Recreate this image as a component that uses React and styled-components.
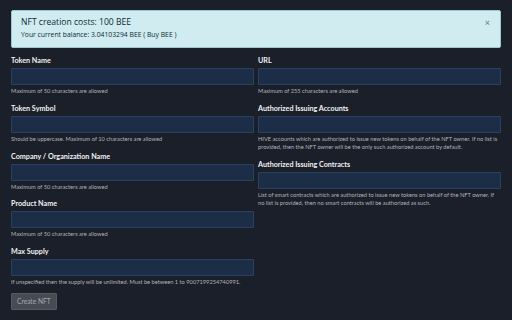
import React from "react";
import styled, { createGlobalStyle } from "styled-components";

const GlobalStyle = createGlobalStyle`
	html, body {
		margin: 0;
		padding: 0;
		background: #1b1f2a;
	}
	body {
		font-family: Lato, "Open Sans", sans-serif;
		color: #e6e8ec;
	}
`;

const Page = styled.div`
	width: 512px;
	height: 320px;
	box-sizing: border-box;
	padding: 10px 11px 0 11px;
	overflow: hidden;
`;

const Alert = styled.div`
	position: relative;
	box-sizing: border-box;
	height: 38px;
	background: #d1ecf1;
	border: 1px solid #9cc7cf;
	border-radius: 2px;
	padding: 5px 9px;
	color: #0c2a33;
	margin-bottom: 8px;
`;

const AlertTitle = styled.div`
	font-family: "Open Sans", sans-serif;
	font-size: 8.6px;
	line-height: 12px;
	font-weight: 500;
	margin-bottom: 2px;
`;

const AlertText = styled.div`
	font-family: "Open Sans", sans-serif;
	font-size: 6.8px;
	line-height: 10px;
`;

const Close = styled.span`
	position: absolute;
	right: 10px;
	top: 6px;
	font-size: 9px;
	color: #7d8d96;
	font-weight: bold;
`;

const Columns = styled.div`
	display: grid;
	grid-template-columns: 243px 243px;
	column-gap: 4px;
`;

const Column = styled.div`
	display: flex;
	flex-direction: column;
`;

const Field = styled.div`
	display: flex;
	flex-direction: column;
	margin-bottom: 8.75px;
`;

const Label = styled.label`
	font-size: 7.2px;
	line-height: 10px;
	font-weight: 700;
	color: #f0f1f3;
	margin-bottom: 2px;
`;

const Input = styled.div`
	box-sizing: border-box;
	height: 17px;
	background: #1c2d48;
	border: 1px solid #2b4060;
	border-radius: 1px;
`;

const Help = styled.div`
	font-size: 5.7px;
	line-height: 8px;
	color: #b0b4bb;
	margin-top: 2px;
`;

const Button = styled.button`
	align-self: flex-start;
	height: 17px;
	padding: 0 5px;
	background: #474c54;
	border: 1px solid #555a62;
	border-radius: 1px;
	color: #a3a7ad;
	font-family: Lato, "Open Sans", sans-serif;
	font-size: 6.6px;
	margin-top: -2px;
`;

const left = [
	["Token Name", "Maximum of 50 characters are allowed"],
	["Token Symbol", "Should be uppercase. Maximum of 10 characters are allowed"],
	["Company / Organization Name", "Maximum of 50 characters are allowed"],
	["Product Name", "Maximum of 50 characters are allowed"],
	[
		"Max Supply",
		"If unspecified then the supply will be unlimited. Must be between 1 to 9007199254740991.",
	],
];

const right = [
	["URL", "Maximum of 255 characters are allowed"],
	[
		"Authorized Issuing Accounts",
		"HIVE accounts which are authorized to issue new tokens on behalf of the NFT owner. If no list is provided, then the NFT owner will be the only such authorized account by default.",
	],
	[
		"Authorized Issuing Contracts",
		"List of smart contracts which are authorized to issue new tokens on behalf of the NFT owner. If no list is provided, then no smart contracts will be authorized as such.",
	],
];

function FormField({ label, help }) {
	return (
		<Field>
			<Label>{label}</Label>
			<Input />
			<Help>{help}</Help>
		</Field>
	);
}

export default function App() {
	return (
		<>
			<GlobalStyle />
			<Page>
				<Alert>
					<AlertTitle>NFT creation costs: 100 BEE</AlertTitle>
					<AlertText>Your current balance: 3.04103294 BEE ( Buy BEE )</AlertText>
					<Close>×</Close>
				</Alert>
				<Columns>
					<Column>
						{left.map(([label, help]) => (
							<FormField key={label} label={label} help={help} />
						))}
						<Button disabled>Create NFT</Button>
					</Column>
					<Column>
						{right.map(([label, help]) => (
							<FormField key={label} label={label} help={help} />
						))}
					</Column>
				</Columns>
			</Page>
		</>
	);
}
